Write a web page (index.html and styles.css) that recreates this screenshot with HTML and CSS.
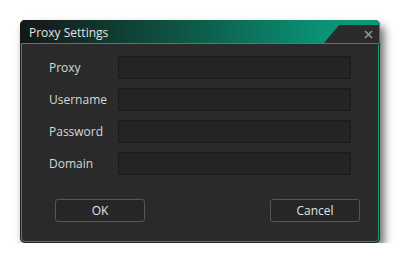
FILE: index.html
```html
<!DOCTYPE html>
<html>
<head>
<meta charset="utf-8">
<link rel="stylesheet" href="styles.css">
</head>
<body>
<div class="window">
  <div class="titlebar">
    <div class="title">Proxy Settings</div>
    <div class="close">
      <svg width="9" height="9" viewBox="0 0 9 9"><path d="M1 1L8 8M8 1L1 8" stroke="#8e9aa0" stroke-width="1.5" fill="none"/></svg>
    </div>
  </div>
  <div class="content">
    <div class="form">
      <label class="label">Proxy</label><div class="input"></div>
      <label class="label">Username</label><div class="input"></div>
      <label class="label">Password</label><div class="input"></div>
      <label class="label">Domain</label><div class="input"></div>
    </div>
    <div class="buttons">
      <div class="btn">OK</div>
      <div class="btn">Cancel</div>
    </div>
  </div>
</div>
</body>
</html>
```
FILE: styles.css
```css
html, body {
  margin: 0;
  padding: 0;
  background: #ffffff;
}
body {
  font-family: "Open Sans", "Noto Sans", sans-serif;
  color: #d6d6d6;
}
.window {
  margin: 20px 0 0 20px;
  width: 360px;
  height: 223px;
  display: flex;
  flex-direction: column;
  background: #222222;
  border-radius: 5px;
  box-shadow: 4px 6px 10px rgba(0, 0, 0, 0.6);
  overflow: hidden;
}
.titlebar {
  height: 23px;
  flex: none;
  display: flex;
  align-items: flex-end;
  background: linear-gradient(90deg, #161616 0%, #0d5d4b 50%, #0a9476 85%, #0a9a79 100%);
}
.title {
  flex: 1;
  align-self: center;
  padding-left: 9px;
  font-size: 12px;
  line-height: 23px;
  color: #e4e4e4;
  padding-top: 1px;
}
.close {
  width: 55px;
  height: 18px;
  margin-right: 1px;
  background: #2a2a2a;
  clip-path: polygon(15px 0, 100% 0, 100% 100%, 0 100%);
  display: flex;
  align-items: center;
  justify-content: flex-end;
  padding-right: 6px;
  box-sizing: border-box;
}
.close svg {
  display: block;
}
.content {
  flex: 1;
  margin: 0 1px 1px 1px;
  background: #2a2a2a;
  border: 1px solid #169a69;
  border-radius: 0 0 4px 4px;
  padding: 12px 27px 0 27px;
  display: flex;
  flex-direction: column;
}
.form {
  display: grid;
  grid-template-columns: 69px 1fr;
  grid-auto-rows: 23px;
  row-gap: 9px;
}
.label {
  font-size: 12px;
  line-height: 23px;
  color: #d8d8d8;
}
.input {
  background: #242424;
  border: 1px solid #1a1a1a;
  border-radius: 2px;
}
.buttons {
  margin-top: 24px;
  display: flex;
  justify-content: space-between;
  padding: 0 18px 0 6px;
  margin-right: -27px;
}
.btn {
  width: 90px;
  height: 23px;
  box-sizing: border-box;
  border: 1px solid #565656;
  border-radius: 3px;
  background: #262626;
  color: #e2e2e2;
  font-size: 12px;
  line-height: 21px;
  text-align: center;
}
```
